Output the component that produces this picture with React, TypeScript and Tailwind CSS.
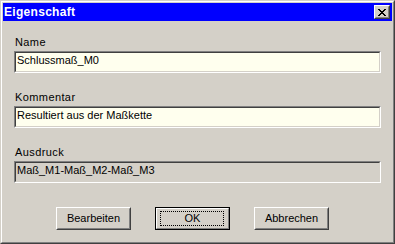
import React from "react";

function Raised({ children, className = "" }: { children?: React.ReactNode; className?: string }) {
  return (
    <div className={"bg-[#d4d0c8] border border-t-white border-l-white border-b-[#404040] border-r-[#404040] " + className}>
      <div className="w-full h-full border border-t-[#d4d0c8] border-l-[#d4d0c8] border-b-[#808080] border-r-[#808080] flex items-center justify-center">
        {children}
      </div>
    </div>
  );
}

function Field({ label, value, disabled }: { label: string; value: string; disabled?: boolean }) {
  return (
    <div className="flex flex-col">
      <div className="h-[13px] leading-[13px] text-[11px] tracking-[0.4px] text-black pl-[1px] mb-[2px]">{label}</div>
      <div className="h-[22px] border border-t-[#808080] border-l-[#808080] border-b-white border-r-white">
        <div
          className={
            "h-full border border-t-[#404040] border-l-[#404040] border-b-[#d4d0c8] border-r-[#d4d0c8] pl-[1px] pt-[1px] text-[11px] leading-[13px] text-black " +
            (disabled ? "bg-[#d4d0c8]" : "bg-[#ffffee]")
          }
        >
          {value}
        </div>
      </div>
    </div>
  );
}

export default function App() {
  return (
    <div
      className="w-[395px] h-[244px] border border-t-[#d4d0c8] border-l-[#d4d0c8] border-b-[#404040] border-r-[#404040] bg-[#d4d0c8]"
      style={{ fontFamily: '"Liberation Sans", Arial, sans-serif' }}
    >
      <div className="h-full border border-t-white border-l-white border-b-[#808080] border-r-[#808080] p-px flex flex-col">
        <div className="h-[18px] bg-[#0000ff] flex items-center justify-between pl-[1px] pr-[2px]">
          <span className="text-white font-bold text-[12px] tracking-[0.3px] leading-[13px]">Eigenschaft</span>
          <Raised className="w-[16px] h-[14px]">
            <svg width="8" height="7" viewBox="0 0 8 7" shapeRendering="crispEdges">
              <path
                fill="#000"
                d="M0 0h2v1H0zM6 0h2v1H6zM1 1h2v1H1zM5 1h2v1H5zM2 2h4v1H2zM3 3h2v1H3zM2 4h4v1H2zM1 5h2v1H1zM5 5h2v1H5zM0 6h2v1H0zM6 6h2v1H6z"
              />
            </svg>
          </Raised>
        </div>
        <div className="flex-1 flex flex-col px-[11px] pt-[15px]">
          <div className="flex flex-col gap-[18px]">
            <Field label="Name" value="Schlussmaß_M0" />
            <Field label="Kommentar" value="Resultiert aus der Maßkette" />
            <Field label="Ausdruck" value="Maß_M1-Maß_M2-Maß_M3" disabled />
          </div>
          <div className="flex mt-[24px] pl-[42px] gap-[24px] text-[11px] text-black">
            <Raised className="w-[75px] h-[23px]">Bearbeiten</Raised>
            <div className="w-[75px] h-[23px] border border-black">
              <div className="relative w-full h-full border border-t-white border-l-white border-b-[#808080] border-r-[#808080] flex items-center justify-center">
                OK
                <div className="absolute top-[2px] bottom-[2px] left-[3px] right-[4px] border border-dotted border-black" />
              </div>
            </div>
            <Raised className="w-[75px] h-[23px]">Abbrechen</Raised>
          </div>
        </div>
      </div>
    </div>
  );
}
